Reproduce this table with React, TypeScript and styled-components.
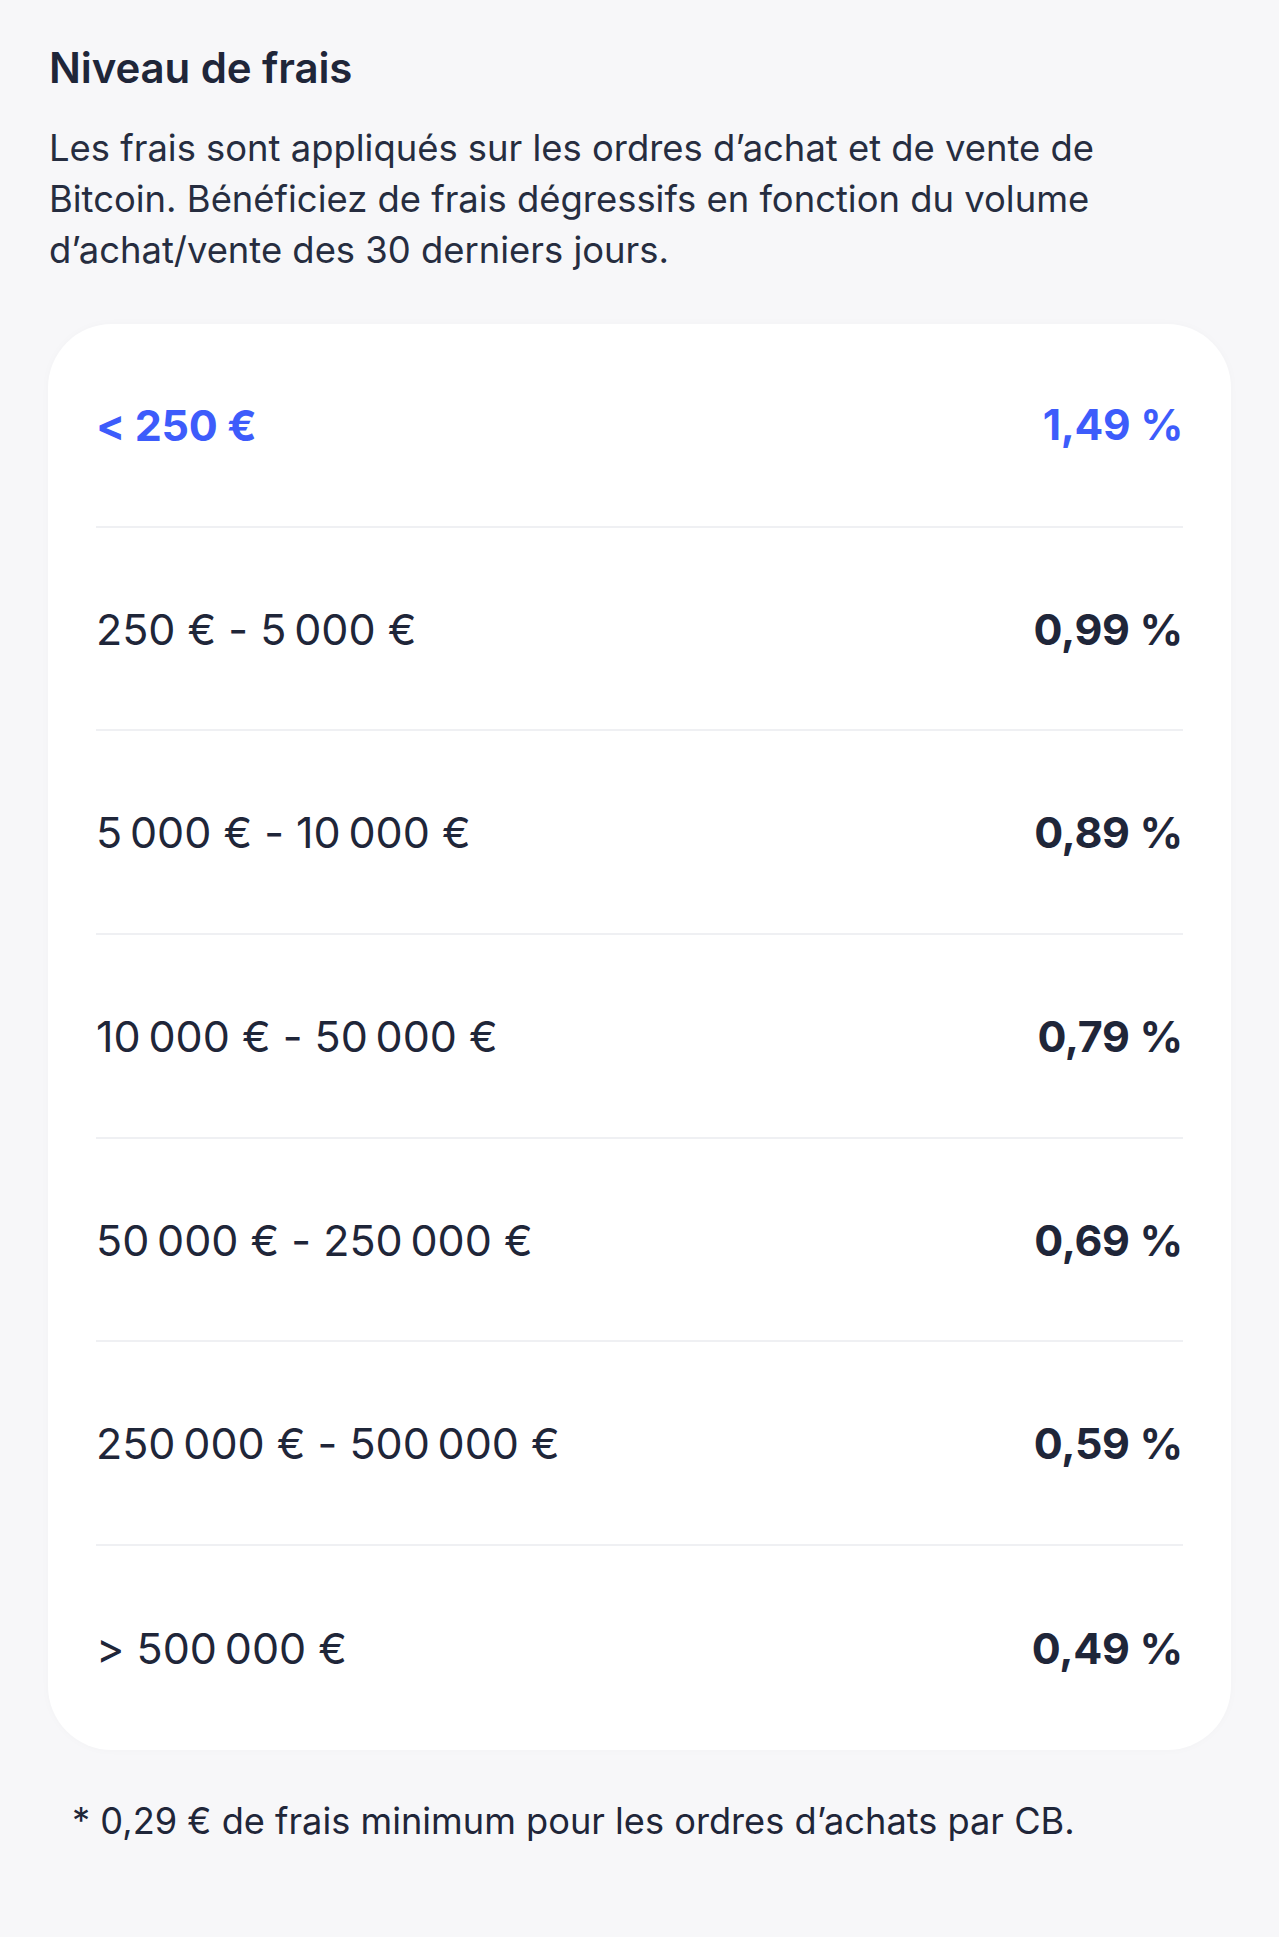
import React from "react";
import styled, { createGlobalStyle } from "styled-components";

const GlobalStyle = createGlobalStyle`
  html, body {
    margin: 0;
    padding: 0;
    background: #f7f7f9;
  }
  body {
    font-family: Inter, "Noto Sans", "Liberation Sans", sans-serif;
    color: #1f2639;
    -webkit-font-smoothing: antialiased;
  }
`;

const Page = styled.main`
  min-height: 1937px;
  box-sizing: border-box;
  padding: 42px 48px 0 48px;
  background: #f7f7f9;
  display: flex;
  flex-direction: column;
`;

const Title = styled.h1`
  margin: 0 0 0 1px;
  font-size: 42px;
  line-height: 52px;
  font-weight: 600;
  letter-spacing: -0.1px;
  color: #1f2639;
`;

const Intro = styled.p`
  margin: 29px 0 0 1px;
  font-size: 36.4px;
  line-height: 51px;
  font-weight: 400;
  color: #262d40;
`;

const Card = styled.section`
  margin-top: 48px;
  background: #ffffff;
  border-radius: 64px;
  padding: 0 48px;
  box-shadow: 0 0 10px rgba(20, 24, 40, 0.025);
  display: flex;
  flex-direction: column;
`;

const Row = styled.div<{ $last?: boolean }>`
  height: 203.7px;
  box-sizing: border-box;
  display: flex;
  align-items: center;
  justify-content: space-between;
  border-bottom: ${(p) => (p.$last ? "none" : "2.5px solid #eff0f3")};
`;

const Range = styled.span<{ $active?: boolean }>`
  font-size: 43px;
  font-weight: ${(p) => (p.$active ? 700 : 400)};
  color: ${(p) => (p.$active ? "#3d5cfb" : "#1f2639")};
  letter-spacing: -0.3px;
`;

const Rate = styled.span<{ $active?: boolean }>`
  font-size: ${(p) => (p.$active ? "42.5px" : "43px")};
  font-weight: 700;
  color: ${(p) => (p.$active ? "#3d5cfb" : "#1f2639")};
  letter-spacing: -0.3px;
`;

const Footnote = styled.p`
  margin: 46px 0 0 24px;
  font-size: 36.2px;
  line-height: 50px;
  color: #1f2639;
`;

const NB = "\u202F";

const tiers = [
  { range: `< 250 €`, rate: "1,49 %" },
  { range: `250 € - 5${NB}000 €`, rate: "0,99 %" },
  { range: `5${NB}000 € - 10${NB}000 €`, rate: "0,89 %" },
  { range: `10${NB}000 € - 50${NB}000 €`, rate: "0,79 %" },
  { range: `50${NB}000 € - 250${NB}000 €`, rate: "0,69 %" },
  { range: `250${NB}000 € - 500${NB}000 €`, rate: "0,59 %" },
  { range: `> 500${NB}000 €`, rate: "0,49 %" },
];

export default function App() {
  return (
    <>
      <GlobalStyle />
      <Page>
        <Title>Niveau de frais</Title>
        <Intro>
          Les frais sont appliqués sur les ordres d’achat et de vente de
          <br />
          Bitcoin. Bénéficiez de frais dégressifs en fonction du volume
          <br />
          d’achat/vente des 30 derniers jours.
        </Intro>
        <Card>
          {tiers.map((t, i) => (
            <Row key={t.rate} $last={i === tiers.length - 1}>
              <Range $active={i === 0}>{t.range}</Range>
              <Rate $active={i === 0}>{t.rate}</Rate>
            </Row>
          ))}
        </Card>
        <Footnote>* 0,29 € de frais minimum pour les ordres d’achats par CB.</Footnote>
      </Page>
    </>
  );
}
